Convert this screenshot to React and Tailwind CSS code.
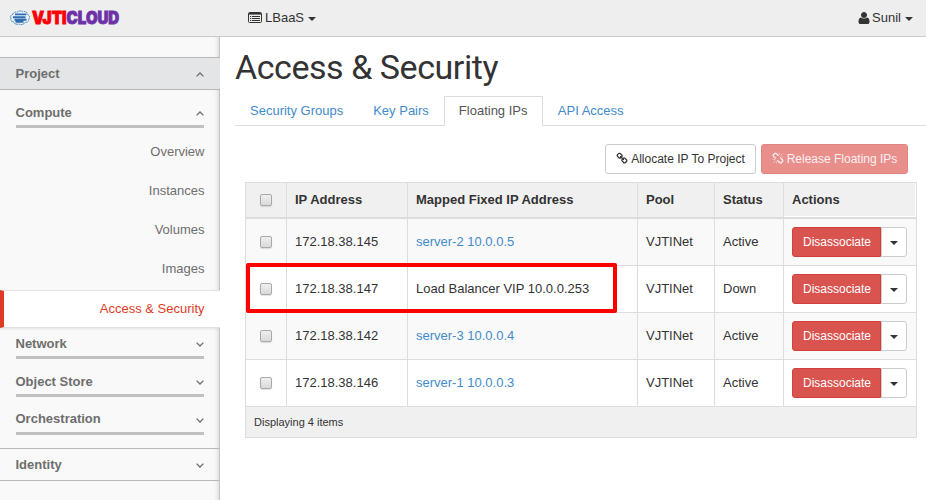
import React from 'react';

const LINK =
  'M1520 1216q0-40-28-68l-208-208q-28-28-68-28-42 0-72 32 3 3 19 18.5t21.5 21.5 15 19 13 25.5 3.5 27.5q0 40-28 68t-68 28q-15 0-27.5-3.5t-25.5-13-19-15-21.5-21.5-18.5-19q-33 31-33 73 0 40 28 68l206 207q27 27 68 27 40 0 68-26l147-146q28-28 28-67zm-703-705q0-40-28-68l-206-207q-28-28-68-28-39 0-68 27l-147 146q-28 28-28 67 0 40 28 68l208 208q27 27 68 27 42 0 72-31-3-3-19-18.5t-21.5-21.5-15-19-13-25.5-3.5-27.5q0-40 28-68t68-28q15 0 27.5 3.5t25.5 13 19 15 21.5 21.5 18.5 19q33-31 33-73zm895 705q0 120-85 203l-147 146q-83 83-203 83-121 0-204-85l-206-207q-83-83-83-203 0-123 88-209l-88-88q-86 88-208 88-120 0-204-84l-208-208q-84-84-84-204t85-203l147-146q83-83 203-83 121 0 204 85l206 207q83 83 83 203 0 123-88 209l88 88q86-88 208-88 120 0 204 84l208 208q84 84 84 204z';
const UNLINK =
  'M503 1271l-256 256q-10 9-23 9-12 0-23-9-9-10-9-23t9-23l256-256q10-9 23-9t23 9q9 10 9 23t-9 23zm169 41v320q0 14-9 23t-23 9-23-9-9-23v-320q0-14 9-23t23-9 23 9 9 23zm-224-224q0 14-9 23t-23 9h-320q-14 0-23-9t-9-23 9-23 23-9h320q14 0 23 9t9 23zm1264 128q0 120-85 203l-147 146q-83 83-203 83-121 0-204-85l-334-335q-21-21-42-56l239-18 273 274q28 28 68 28t68-27l147-146q28-28 28-67 0-40-28-68l-274-275 18-239q35 21 56 42l336 336q84 86 84 204zm-617-724l-239 18-273-274q-28-28-68-28-39 0-68 27l-147 146q-28 28-28 67 0 40 28 68l274 274-18 240q-35-21-56-42l-336-336q-84-86-84-204 0-120 85-203l147-146q83-83 203-83 121 0 204 85l334 335q21 21 42 56zm633 84q0 14-9 23t-23 9h-320q-14 0-23-9t-9-23 9-23 23-9h320q14 0 23 9t9 23zm-544-544v320q0 14-9 23t-23 9-23-9-9-23v-320q0-14 9-23t23-9 23 9 9 23zm407 151l-256 256q-11 9-23 9t-23-9q-9-10-9-23t9-23l256-256q10-9 23-9t23 9q9 10 9 23t-9 23z';
const USER =
  'M1600 1405q0 120-73 189.5t-194 69.5h-874q-121 0-194-69.5t-73-189.5q0-53 3.5-103.5t14-109 26.5-108.5 43-97.5 62-81 85.5-53.5 111.5-20q9 0 42 21.5t74.5 48 108 48 133.5 21.5 133.5-21.5 108-48 74.5-48 42-21.5q61 0 111.5 20t85.5 53.5 62 81 43 97.5 26.5 108.5 14 109 3.5 103.5zm-320-893q0 159-112.5 271.5t-271.5 112.5-271.5-112.5-112.5-271.5 112.5-271.5 271.5-112.5 271.5 112.5 112.5 271.5z';

function Icon({ d, className }) {
  return (
    <svg viewBox="0 0 1792 1792" className={className} fill="currentColor">
      <path d={d} />
    </svg>
  );
}

function Caret({ className = '' }) {
  return (
    <span
      className={`h-0 w-0 border-x-4 border-t-4 border-x-transparent border-t-[#333] ${className}`}
    />
  );
}

function Chevron({ up }) {
  return (
    <svg
      viewBox="0 0 8 5"
      className="mt-px h-[5px] w-2"
      fill="none"
      stroke="#6e6e6e"
      strokeWidth="1.3"
    >
      <path d={up ? 'M0.6 4.4 4 1 7.4 4.4' : 'M0.6 0.6 4 4 7.4 0.6'} />
    </svg>
  );
}

function Logo() {
  return (
    <div className="ml-[9px] flex h-[18px] w-[112px] items-center">
      <svg viewBox="0 0 22 18" className="h-[18px] w-[22px] shrink-0">
        <path
          d="M4 5.2Q5 2.4 8.2 3.2 11 .8 14.2 2.8 18 2 18.6 5.4 21.8 7.4 19.8 10.2 19.8 13.4 16 13.6 13 16.8 10 15 5.8 16 4.8 13 .8 12 2 9.2 .8 6.4 4 5.2Z"
          fill="#e6f0f8"
          stroke="#4b83bf"
          strokeWidth="1"
          strokeDasharray="1.8 .6"
        />
        <path
          d="M6 5.4h11.5M4 8.2h12.5M5.5 10.8h12M6.5 12.8h8"
          stroke="#2f6db0"
          strokeWidth="1.9"
          fill="none"
        />
      </svg>
      <svg viewBox="0 0 35 18" className="h-[18px] w-[35px] shrink-0 overflow-visible">
        <text
          x="1"
          y="15"
          textLength="34.5"
          lengthAdjust="spacingAndGlyphs"
          className="fill-[#fb0007] stroke-[#fb0007] font-['Inter','Open_Sans',sans-serif] text-[17px] font-black"
          strokeWidth=".9"
        >
          VJTI
        </text>
      </svg>
      <svg viewBox="0 0 55 18" className="h-[18px] w-[55px] shrink-0 overflow-visible">
        <text
          x="0.6"
          y="15"
          textLength="52.6"
          lengthAdjust="spacingAndGlyphs"
          className="fill-[#7030a0] stroke-[#6a35b0] font-['Inter','Open_Sans',sans-serif] text-[17px] font-black"
          strokeWidth=".9"
        >
          CLOUD
        </text>
      </svg>
    </div>
  );
}

function Check() {
  return (
    <span className="h-3 w-3 rounded-[2px] border border-[#a9a9a9] bg-linear-to-b from-[#efefef] to-[#dadada] shadow-[0_1px_1px_rgba(0,0,0,0.12)]" />
  );
}

function Group({ label, up, className, labelClass = '' }) {
  return (
    <div
      className={`mr-[15px] ml-4 flex items-center justify-between border-b-[3px] border-[#c0c0c0] font-bold ${className}`}
    >
      <span className={`-ml-[0.5px] ${labelClass}`}>{label}</span>
      <Chevron up={up} />
    </div>
  );
}

const COLS =
  'grid grid-cols-[41px_121px_230px_77px_69px_132px] divide-x divide-[#ddd]';

const rows = [
  ['172.18.38.145', 'server-2 10.0.0.5', 'Active', true],
  ['172.18.38.147', 'Load Balancer VIP 10.0.0.253', 'Down', false],
  ['172.18.38.142', 'server-3 10.0.0.4', 'Active', true],
  ['172.18.38.146', 'server-1 10.0.0.3', 'Active', true],
];

function Row({ ip, mapped, status, link, striped }) {
  return (
    <div
      className={`${COLS} h-[47px] border-b border-[#ddd] leading-[46px] ${striped ? 'bg-[#f9f9f9]' : 'bg-white'}`}
    >
      <div className="flex items-center justify-center pb-px">
        <Check />
      </div>
      <div className="pl-2">{ip}</div>
      <div className={`pl-2 ${link ? 'text-[#428bca]' : ''}`}>{mapped}</div>
      <div className="pl-2">VJTINet</div>
      <div className="pl-2">{status}</div>
      <div className="flex items-center pl-2 text-xs">
        <button className="h-[30px] w-[89px] rounded-l-[3px] border border-[#d43f3a] bg-[#d9534f] pl-px text-white">
          Disassociate
        </button>
        <button className="flex h-[30px] w-[26px] items-center justify-center rounded-r-[3px] border border-[#ccc] bg-white pt-px">
          <Caret />
        </button>
      </div>
    </div>
  );
}

export default function App() {
  return (
    <div className="flex h-[500px] w-[926px] flex-col overflow-hidden bg-white font-['Liberation_Sans',Arial,sans-serif] text-[13px] text-[#333]">
      <header className="flex h-[37px] shrink-0 items-center border-b border-[#c8c8c8] bg-[#eee]">
        <Logo />
        <div className="ml-[127px] flex items-center">
          <svg viewBox="0 0 14 11" className="-mt-px h-[11px] w-[14px]">
            <path
              d="M1.5.5h11a1 1 0 0 1 1 1v8a1 1 0 0 1-1 1h-11a1 1 0 0 1-1-1v-8a1 1 0 0 1 1-1Z"
              fill="none"
              stroke="#333"
            />
            <path d="M1 1h12v1.6H1z" fill="#333" />
            <path d="M2 4.5h1.2M4 4.5h8M2 6.5h1.2M4 6.5h8M2 8.5h1.2M4 8.5h8" stroke="#333" />
          </svg>
          <span className="ml-[3px]">LBaaS</span>
          <Caret className="mt-[2px] ml-[3.5px]" />
        </div>
        <div className="mr-[13px] ml-auto flex items-center">
          <Icon d={USER} className="-mt-px -mr-px h-[14px] w-[14px]" />
          <span className="ml-[2.5px]">Sunil</span>
          <Caret className="mt-[2px] ml-1" />
        </div>
      </header>
      <div className="flex min-h-0 flex-1">
        <aside className="flex w-[220px] shrink-0 flex-col bg-[#f9f9f9] text-[#6e6e6e]">
          <div className="h-5 border-r border-[#c3c3c3] shadow-[inset_-5px_0_5px_-4px_rgba(0,0,0,0.14)]" />
          <div className="flex h-[33px] items-center justify-between border-y border-[#b8b8b8] bg-[#e3e5e6] pr-4 pl-[15.5px] font-bold">
            <span>Project</span>
            <Chevron up />
          </div>
          <div className="h-[200px] border-r border-[#c3c3c3] shadow-[inset_-5px_0_5px_-4px_rgba(0,0,0,0.14)]">
            <Group label="Compute" up className="h-[38px] pt-[10px]" />
            <div className="flex flex-col pt-1 pr-[14.5px] text-right leading-[39px]">
              <span>Overview</span>
              <span>Instances</span>
              <span>Volumes</span>
              <span>Images</span>
            </div>
          </div>
          <div className="h-[38px] border-y border-[#e1e1e1] border-l-4 border-l-[#dd3b26] bg-white pr-[15.5px] text-right leading-9 text-[#dd3b26]">
            Access &amp; Security
          </div>
          <div className="h-[120px] border-r border-[#c3c3c3] shadow-[inset_-5px_0_5px_-4px_rgba(0,0,0,0.14),inset_0_3px_3px_-2px_rgba(0,0,0,0.08)]">
            <Group label="Network" className="h-[31px] pt-1" />
            <Group label="Object Store" className="h-[38px] pt-[11px]" />
            <Group label="Orchestration" className="h-[38px] pt-[10px]" labelClass="mb-[2px]" />
          </div>
          <div className="flex h-[33px] items-center justify-between border-y border-r border-[#b8b8b8] border-r-[#c3c3c3] pr-[15px] pl-[15.5px] font-bold shadow-[inset_-5px_0_5px_-4px_rgba(0,0,0,0.14)]">
            <span>Identity</span>
            <Chevron />
          </div>
          <div className="flex-1 border-r border-[#c3c3c3] shadow-[inset_-5px_0_5px_-4px_rgba(0,0,0,0.14)]" />
        </aside>
        <main className="min-w-0 flex-1 pl-[15px]">
          <h1 className="h-[59px] font-['Roboto','Noto_Sans',sans-serif] text-[34px] leading-[61px] font-normal tracking-[-0.45px] whitespace-nowrap">
            Access &amp; Security
          </h1>
          <nav className="flex h-[30px] border-b border-[#ddd] leading-7 text-[#428bca]">
            <a className="px-[15px] pt-px">Security Groups</a>
            <a className="px-[15px] pt-px">Key Pairs</a>
            <a className="-mb-px w-[99px] border border-b-0 border-[#ddd] bg-white px-[14px] text-[#555]">
              Floating IPs
            </a>
            <a className="px-[15px] pt-px">API Access</a>
          </nav>
          <div className="mt-[18px] mr-[18px] flex justify-end gap-[5px] text-xs">
            <button className="flex h-[30px] w-[151px] items-center justify-center rounded-[3px] border border-[#ccc] bg-white">
              <Icon d={LINK} className="mr-[3px] h-[12px] w-[12px] -translate-y-[0.5px]" />
              Allocate IP To Project
            </button>
            <button className="flex h-[30px] w-[147px] items-center justify-center rounded-[3px] border border-[#e28582] bg-[#e88f8c] text-[#fdf0f0]">
              <Icon d={UNLINK} className="mr-[3px] h-[12px] w-[12px] -translate-y-[0.5px]" />
              Release Floating IPs
            </button>
          </div>
          <div className="relative mt-2 ml-[10px] w-[672px] border border-[#ddd]">
            <div className={`${COLS} h-9 border-b-2 border-[#ddd] bg-[#f0f0f0] leading-[34px] font-bold`}>
              <div className="flex items-center justify-center pb-px">
                <Check />
              </div>
              <div className="pl-2">IP Address</div>
              <div className="pl-2">Mapped Fixed IP Address</div>
              <div className="pl-2">Pool</div>
              <div className="pl-2">Status</div>
              <div className="pl-2 shadow-[inset_-1px_-1px_0_#fff]">Actions</div>
            </div>
            {rows.map(([ip, mapped, status, link], i) => (
              <Row key={ip} ip={ip} mapped={mapped} status={status} link={link} striped={i % 2 === 0} />
            ))}
            <div className="h-[30px] bg-[#f0f0f0] pl-2 text-[11px] leading-[30px]">Displaying 4 items</div>
            <div className="absolute top-20 left-0 h-[50px] w-[371px] rounded-[2px] border-4 border-[#fe0000]" />
          </div>
        </main>
      </div>
    </div>
  );
}
